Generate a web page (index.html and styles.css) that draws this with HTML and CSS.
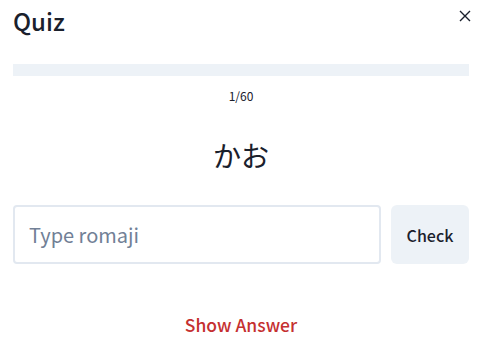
FILE: index.html
```html
<!DOCTYPE html>
<html lang="ja">
<head>
<meta charset="utf-8">
<link rel="stylesheet" href="styles.css">
</head>
<body>
<div class="modal">
  <div class="header">
    <h1 class="title">Quiz</h1>
    <button class="close" aria-label="Close">
      <svg width="12" height="12" viewBox="0 0 12 12"><path d="M1 1 L11 11 M11 1 L1 11" stroke="#1a202c" stroke-width="1.4" fill="none"/></svg>
    </button>
  </div>
  <div class="progress"><div class="progress-fill" style="width:0%"></div></div>
  <div class="count">1/60</div>
  <div class="kana">かお</div>
  <div class="answer-row">
    <input class="answer" type="text" placeholder="Type romaji">
    <button class="check">Check</button>
  </div>
  <div class="show-row"><button class="show">Show Answer</button></div>
</div>
</body>
</html>
```
FILE: styles.css
```css
html, body {
  margin: 0;
  padding: 0;
  background: #ffffff;
}
body {
  font-family: "Noto Sans CJK JP", "Noto Sans", sans-serif;
  color: #1a202c;
}
.modal {
  display: flex;
  flex-direction: column;
  padding: 0 21px 0 13px;
}
.header {
  display: flex;
  justify-content: space-between;
  align-items: flex-start;
  padding-top: 5px;
}
.title {
  margin: 0;
  font-size: 24px;
  line-height: 32px;
  font-weight: 500;
}
.close {
  border: none;
  background: none;
  padding: 0;
  margin: 5px -2px 0 0;
  width: 12px;
  height: 12px;
  display: flex;
}
.progress {
  margin-top: 27px;
  height: 12px;
  background: #edf2f7;
}
.progress-fill {
  height: 100%;
  background: #3182ce;
}
.count {
  margin-top: 12px;
  text-align: center;
  font-size: 12px;
  line-height: 16px;
}
.kana {
  margin-top: 31px;
  text-align: center;
  font-size: 28px;
  line-height: 40px;
}
.answer-row {
  margin-top: 30px;
  display: flex;
  gap: 10px;
}
.answer {
  flex: 1;
  min-width: 0;
  height: 59px;
  box-sizing: border-box;
  border: 2px solid #e2e8f0;
  border-radius: 4px;
  padding: 0 14px;
  font-family: inherit;
  font-size: 20px;
  color: #1a202c;
  outline: none;
}
.answer::placeholder {
  color: #718096;
}
.check {
  width: 78px;
  height: 59px;
  border: none;
  border-radius: 6px;
  background: #edf2f7;
  font-family: inherit;
  font-size: 16px;
  font-weight: 500;
  color: #1a202c;
  padding: 0;
}
.show-row {
  margin-top: 47px;
  display: flex;
  justify-content: center;
}
.show {
  border: none;
  background: none;
  padding: 0;
  font-family: inherit;
  font-size: 17.5px;
  line-height: 28px;
  font-weight: 500;
  color: #c53030;
}
```
